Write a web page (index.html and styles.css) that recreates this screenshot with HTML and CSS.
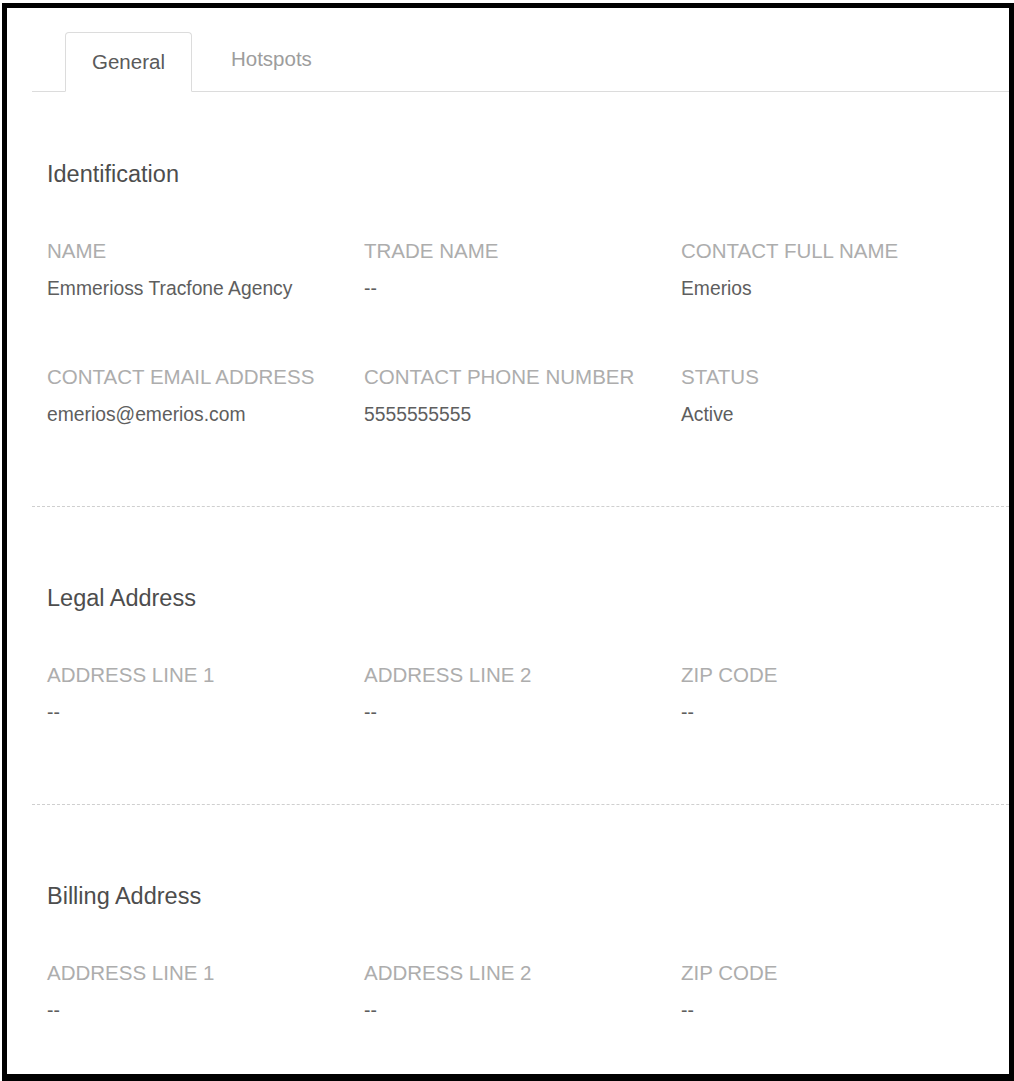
FILE: index.html
```html
<!DOCTYPE html>
<html lang="en">
<head>
<meta charset="utf-8">
<title>Agency details</title>
<link rel="stylesheet" href="styles.css">
</head>
<body>
<div class="frame">
  <div class="tabs">
    <div class="tab tab-active">General</div>
    <div class="tab">Hotspots</div>
  </div>
  <div class="content">
    <section class="section section-first">
      <h2 class="section-title">Identification</h2>
      <div class="fields">
        <div class="field"><div class="label">NAME</div><div class="value">Emmerioss Tracfone Agency</div></div>
        <div class="field"><div class="label">TRADE NAME</div><div class="value">--</div></div>
        <div class="field"><div class="label">CONTACT FULL NAME</div><div class="value">Emerios</div></div>
        <div class="field"><div class="label">CONTACT EMAIL ADDRESS</div><div class="value">emerios@emerios.com</div></div>
        <div class="field"><div class="label">CONTACT PHONE NUMBER</div><div class="value">5555555555</div></div>
        <div class="field"><div class="label">STATUS</div><div class="value">Active</div></div>
      </div>
    </section>
    <section class="section">
      <h2 class="section-title">Legal Address</h2>
      <div class="fields">
        <div class="field"><div class="label">ADDRESS LINE 1</div><div class="value">--</div></div>
        <div class="field"><div class="label">ADDRESS LINE 2</div><div class="value">--</div></div>
        <div class="field"><div class="label">ZIP CODE</div><div class="value">--</div></div>
      </div>
    </section>
    <section class="section section-last">
      <h2 class="section-title">Billing Address</h2>
      <div class="fields">
        <div class="field"><div class="label">ADDRESS LINE 1</div><div class="value">--</div></div>
        <div class="field"><div class="label">ADDRESS LINE 2</div><div class="value">--</div></div>
        <div class="field"><div class="label">ZIP CODE</div><div class="value">--</div></div>
      </div>
    </section>
  </div>
</div>
</body>
</html>
```
FILE: styles.css
```css
html, body {
  margin: 0;
  padding: 0;
  background: #fff;
}
body {
  font-family: "Liberation Sans", Arial, sans-serif;
  color: #5e5e5e;
}
.frame {
  margin: 3px 0 0 2px;
  width: 1012px;
  height: 1078px;
  box-sizing: border-box;
  border: 5px solid #000;
  border-bottom-width: 7px;
  overflow: hidden;
  background: #fff;
}
.tabs {
  display: flex;
  align-items: flex-end;
  margin: 24px 0 0 25px;
  padding-left: 33px;
  border-bottom: 1px solid #dcdcdc;
}
.tab {
  font-size: 20.5px;
  line-height: 24px;
  padding: 14px 26px 20px;
  border: 1px solid transparent;
  margin-bottom: -1px;
  color: #9d9d9d;
}
.tab + .tab {
  margin-left: 12px;
}
.tab-active {
  padding: 17px 26px 17px;
  border-color: #dcdcdc;
  border-bottom-color: #fff;
  border-radius: 4px 4px 0 0;
  background: #fff;
  color: #5a5a5a;
}
.content {
  margin-left: 25px;
}
.section {
  padding: 76px 0 79px 15px;
  border-bottom: 1px dashed #cfcfcf;
}
.section-first {
  padding-top: 67px;
}
.section-last {
  border-bottom: none;
}
.section-title {
  margin: 0 0 50px;
  font-size: 23.5px;
  line-height: 30px;
  font-weight: normal;
  color: #4d4d4d;
}
.fields {
  display: grid;
  grid-template-columns: repeat(3, 317px);
  row-gap: 64px;
}
.field {
  display: flex;
  flex-direction: column;
  gap: 14px;
}
.label {
  font-size: 20.5px;
  line-height: 24px;
  color: #adadad;
  white-space: nowrap;
}
.value {
  font-size: 19.3px;
  line-height: 24px;
  color: #5e5e5e;
  white-space: nowrap;
}
```
